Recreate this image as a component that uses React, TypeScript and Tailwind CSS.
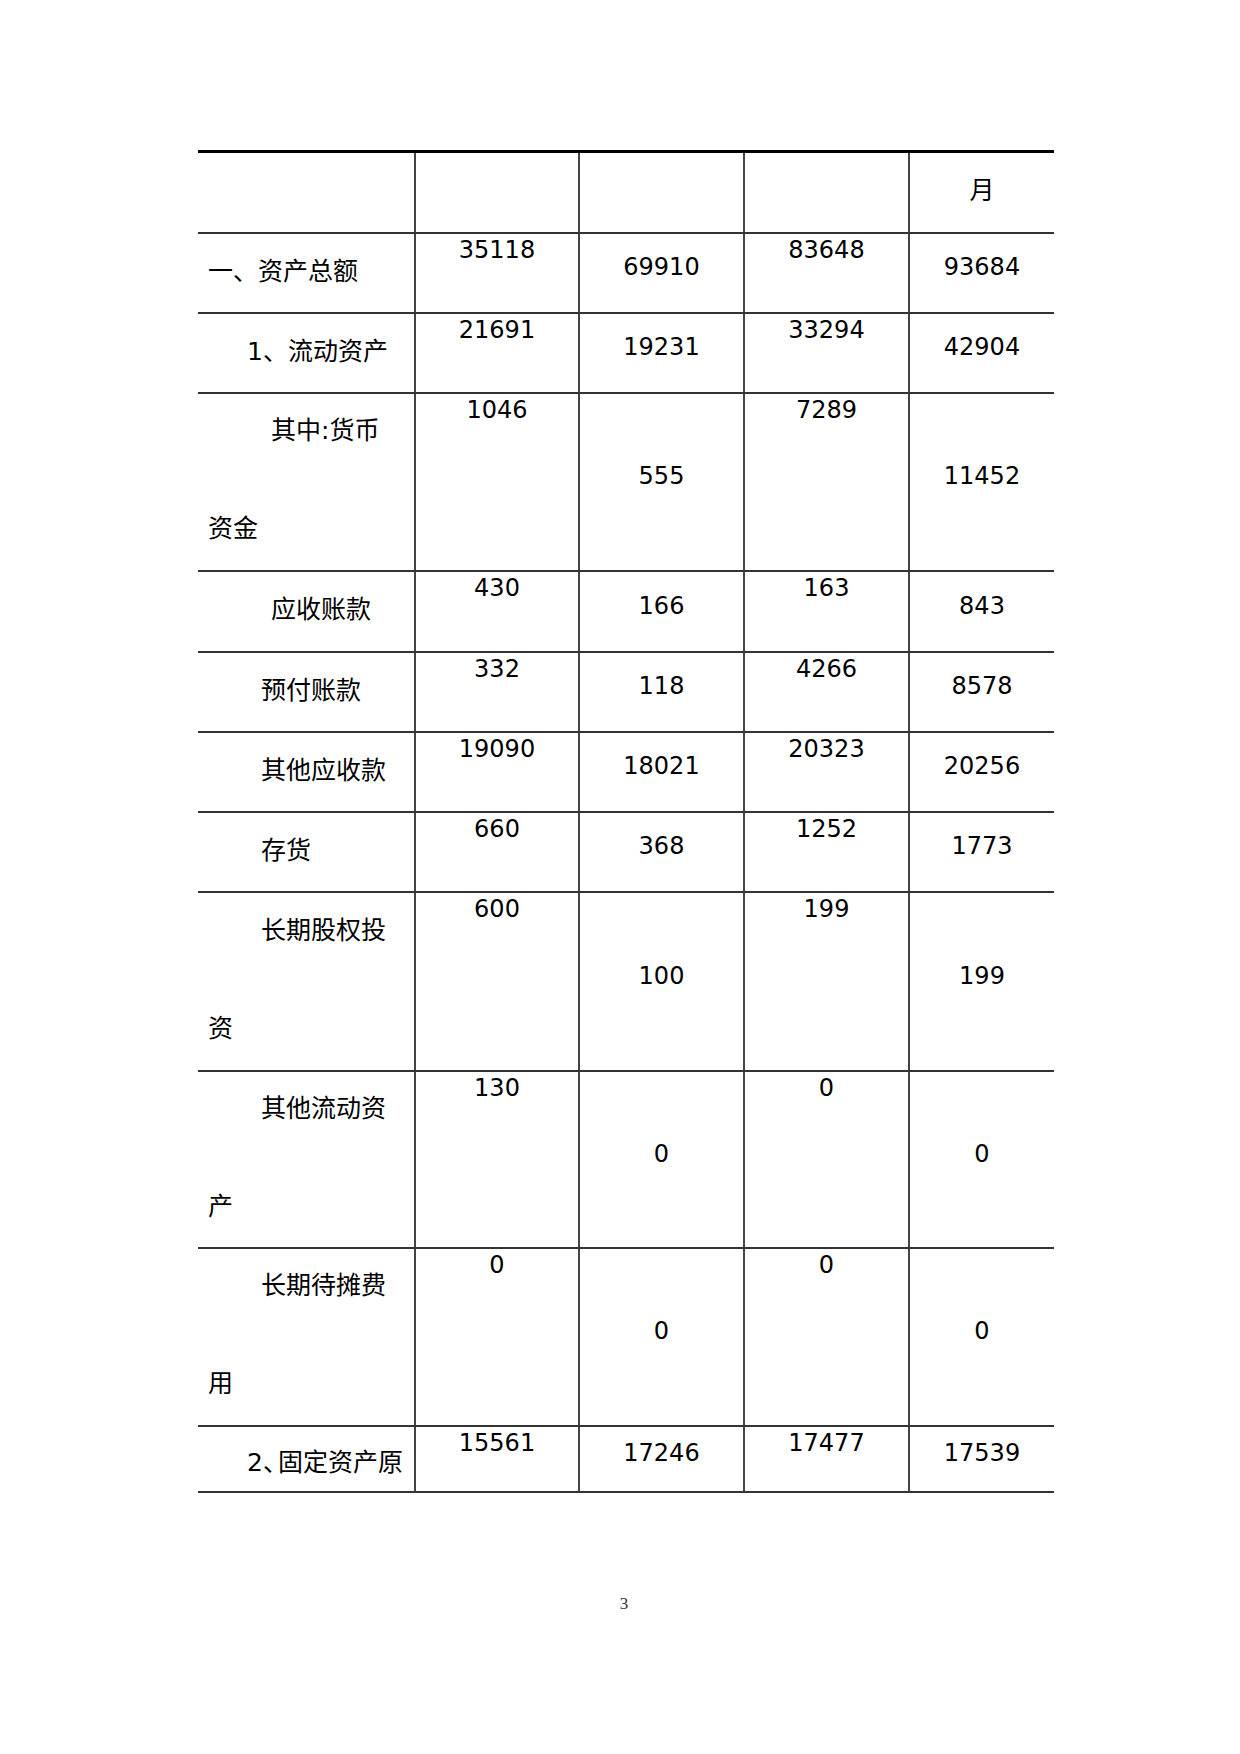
import React from "react";

// Row data for the asset table
type Row = {
  h: string;
  lines: string[];
  indent: string;
  pt: string;
  vals: [string, string, string, string];
};

const rows: Row[] = [
  { h: "h-[80px]", lines: ["一、资产总额"], indent: "ml-0", pt: "pt-[24px]", vals: ["35118", "69910", "83648", "93684"] },
  { h: "h-[80px]", lines: ["1、流动资产"], indent: "ml-[39px]", pt: "pt-[24px]", vals: ["21691", "19231", "33294", "42904"] },
  { h: "h-[178px]", lines: ["其中:货币", "资金"], indent: "ml-[63px]", pt: "pt-[23px]", vals: ["1046", "555", "7289", "11452"] },
  { h: "h-[81px]", lines: ["应收账款"], indent: "ml-[63px]", pt: "pt-[24px]", vals: ["430", "166", "163", "843"] },
  { h: "h-[80px]", lines: ["预付账款"], indent: "ml-[53px]", pt: "pt-[24px]", vals: ["332", "118", "4266", "8578"] },
  { h: "h-[80px]", lines: ["其他应收款"], indent: "ml-[53px]", pt: "pt-[24px]", vals: ["19090", "18021", "20323", "20256"] },
  { h: "h-[80px]", lines: ["存货"], indent: "ml-[53px]", pt: "pt-[24px]", vals: ["660", "368", "1252", "1773"] },
  { h: "h-[179px]", lines: ["长期股权投", "资"], indent: "ml-[53px]", pt: "pt-[24px]", vals: ["600", "100", "199", "199"] },
  { h: "h-[177px]", lines: ["其他流动资", "产"], indent: "ml-[53px]", pt: "pt-[23px]", vals: ["130", "0", "0", "0"] },
  { h: "h-[178px]", lines: ["长期待摊费", "用"], indent: "ml-[53px]", pt: "pt-[23px]", vals: ["0", "0", "0", "0"] },
];

const cellLine = "border-r-2 border-[#444]";

function TopCell({ value }: { value: string }) {
  return <div className={`${cellLine} pt-[2px] text-center leading-[28px]`}>{value}</div>;
}

function MidCell({ value, last }: { value: string; last?: boolean }) {
  return (
    <div className={`${last ? "" : cellLine} flex items-center justify-center pb-[12px] leading-[28px]`}>
      {value}
    </div>
  );
}

export default function App() {
  return (
    <div className="w-[1240px] h-[1754px] bg-white text-black font-[family-name:DejaVu_Sans,Noto_Sans_CJK_SC,sans-serif] text-[24px]">
      <div className="pt-[150px]">
        <div className="ml-[198px] w-[856px] border-t-[3px] border-black">
          {/* Header */}
          <div className="grid grid-cols-[218px_164px_165px_165px_144px] h-[81px] border-b-2 border-[#333]">
            <div className={cellLine} />
            <div className={cellLine} />
            <div className={cellLine} />
            <div className={cellLine} />
            <div className="pt-[24px] text-center text-[25px] leading-[28px]">月</div>
          </div>

          {rows.map((r, i) => (
            <div
              key={i}
              className={`grid grid-cols-[218px_164px_165px_165px_144px] ${r.h} border-b-2 border-[#333]`}
            >
              <div className={`${cellLine} pl-[10px] ${r.pt} text-[25px] leading-[28px] whitespace-nowrap`}>
                <div className={r.indent}>{r.lines[0]}</div>
                {r.lines[1] && <div className="mt-[70px]">{r.lines[1]}</div>}
              </div>
              <TopCell value={r.vals[0]} />
              <MidCell value={r.vals[1]} />
              <TopCell value={r.vals[2]} />
              <MidCell value={r.vals[3]} last />
            </div>
          ))}

          {/* Last row */}
          <div className="grid grid-cols-[218px_164px_165px_165px_144px] h-[66px] border-b-2 border-[#333]">
            <div className={`${cellLine} pl-[10px] pt-[22px] text-[25px] leading-[28px] whitespace-nowrap`}>
              <div className="ml-[39px]">
                2<span className="tracking-[-10px]">、</span>固定资产原
              </div>
            </div>
            <TopCell value="15561" />
            <MidCell value="17246" />
            <TopCell value="17477" />
            <MidCell value="17539" last />
          </div>
        </div>

        {/* Page number */}
        <div className="mt-[101px] pl-[8px] text-center font-[family-name:Liberation_Serif,serif] text-[17px] leading-[20px] text-[#333]">
          3
        </div>
      </div>
    </div>
  );
}
